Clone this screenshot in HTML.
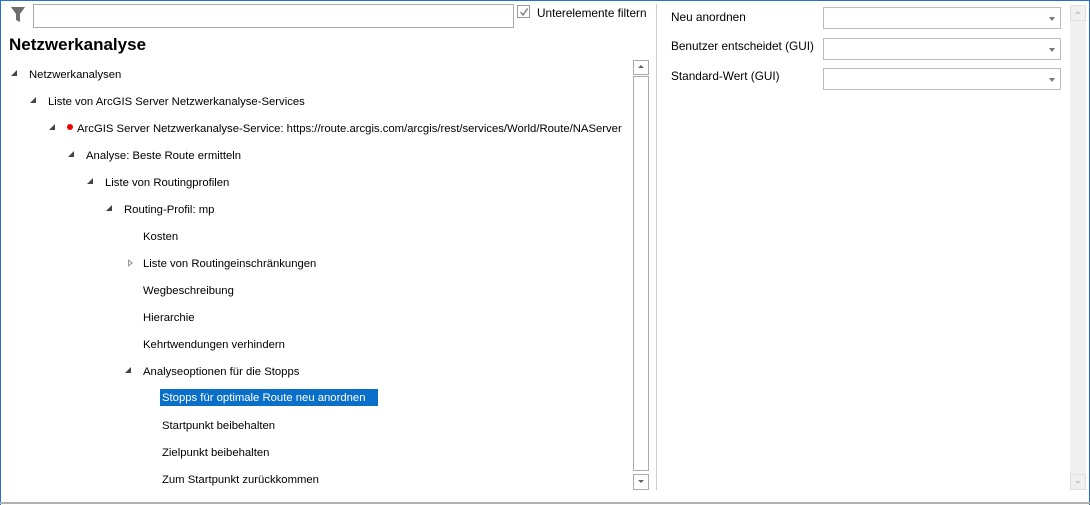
<!DOCTYPE html>
<html><head><meta charset="utf-8"><style>
*{margin:0;padding:0;box-sizing:border-box}
body{width:1090px;height:505px;background:#fff;font-family:"Liberation Sans",sans-serif;font-size:11.3px;color:#000;position:relative;overflow:hidden}
.a{position:absolute}
.t{position:absolute;white-space:nowrap;line-height:16px;margin-top:1px}
.exp{position:absolute;width:0;height:0;border-left:6px solid transparent;border-bottom:6px solid #444}
.col{position:absolute;width:0;height:0;border-top:4px solid transparent;border-bottom:4px solid transparent;border-left:5px solid #999}
.col::after{content:"";position:absolute;left:-4px;top:-2px;border-top:2px solid transparent;border-bottom:2px solid transparent;border-left:2.5px solid #fff}
.cb{position:absolute;left:823px;width:238px;height:22px;border:1px solid #bbb;background:#fff}
.cb::after{content:"";position:absolute;right:5px;top:9px;border-left:3px solid transparent;border-right:3px solid transparent;border-top:4px solid #777}
</style></head><body>
<div class="a" style="left:0;top:0;width:1090px;height:1px;background:#2a6fc9"></div>
<div class="a" style="left:0;top:0;width:1px;height:505px;background:#2a6fc9"></div>
<div class="a" style="left:1089px;top:0;width:1px;height:505px;background:#2a6fc9"></div>
<div class="a" style="left:0;top:502px;width:1090px;height:2px;background:#b0b0b0"></div>

<svg class="a" style="left:10px;top:6px" width="16" height="18" viewBox="0 0 16 18"><path d="M1 1H15L10 8V16L6 14V8Z" fill="#6d6d6d"/></svg>
<div class="a" style="left:33px;top:4px;width:481px;height:24px;border:1px solid #aaa"></div>
<div class="a" style="left:517px;top:5px;width:13px;height:13px;border:1px solid #999"></div>
<svg class="a" style="left:519px;top:7px" width="10" height="10"><path d="M1.5 5L4 8L8.5 1.5" stroke="#777" stroke-width="1.3" fill="none"/></svg>
<div class="t" style="left:537px;top:4px;font-size:11.8px">Unterelemente filtern</div>
<div class="t" style="left:9px;top:34px;font-size:17px;font-weight:bold;line-height:20px">Netzwerkanalyse</div>

<div class="exp" style="left:11px;top:70px"></div><div class="t" style="left:29px;top:66px">Netzwerkanalysen</div>
<div class="exp" style="left:30px;top:97px"></div><div class="t" style="left:48px;top:93px">Liste von ArcGIS Server Netzwerkanalyse-Services</div>
<div class="exp" style="left:49px;top:124px"></div><div class="a" style="left:67px;top:124px;width:6px;height:6px;border-radius:50%;background:#e00"></div><div class="t" style="left:77px;top:120px">ArcGIS Server Netzwerkanalyse-Service: https://route.arcgis.com/arcgis/rest/services/World/Route/NAServer</div>
<div class="exp" style="left:68px;top:151px"></div><div class="t" style="left:86px;top:147px">Analyse: Beste Route ermitteln</div>
<div class="exp" style="left:87px;top:178px"></div><div class="t" style="left:105px;top:174px">Liste von Routingprofilen</div>
<div class="exp" style="left:106px;top:205px"></div><div class="t" style="left:124px;top:201px">Routing-Profil: mp</div>
<div class="t" style="left:143px;top:228px">Kosten</div>
<div class="col" style="left:128px;top:259px"></div><div class="t" style="left:143px;top:255px">Liste von Routingeinschränkungen</div>
<div class="t" style="left:143px;top:282px">Wegbeschreibung</div>
<div class="t" style="left:143px;top:309px">Hierarchie</div>
<div class="t" style="left:143px;top:336px">Kehrtwendungen verhindern</div>
<div class="exp" style="left:125px;top:367px"></div><div class="t" style="left:143px;top:363px">Analyseoptionen für die Stopps</div>
<div class="a" style="left:160px;top:389px;width:218px;height:17px;background:#0a6fc8"></div><div class="t" style="left:162px;top:389px;color:#fff">Stopps für optimale Route neu anordnen</div>
<div class="t" style="left:162px;top:417px">Startpunkt beibehalten</div>
<div class="t" style="left:162px;top:444px">Zielpunkt beibehalten</div>
<div class="t" style="left:162px;top:471px">Zum Startpunkt zurückkommen</div>

<div class="a" style="left:633px;top:60px;width:16px;height:15px;border:1px solid #aaa"></div>
<div class="a" style="left:638px;top:65px;border-left:3px solid transparent;border-right:3px solid transparent;border-bottom:3px solid #666"></div>
<div class="a" style="left:633px;top:76px;width:16px;height:395px;border:1px solid #aaa"></div>
<div class="a" style="left:633px;top:474px;width:16px;height:16px;border:1px solid #aaa"></div>
<div class="a" style="left:638px;top:480px;border-left:3px solid transparent;border-right:3px solid transparent;border-top:3px solid #666"></div>

<div class="a" style="left:656px;top:4px;width:1px;height:486px;background:#ccc"></div>

<div class="t" style="left:671px;top:8px;font-size:11.8px">Neu anordnen</div>
<div class="cb" style="top:7px"></div>
<div class="t" style="left:671px;top:37px;font-size:11.8px">Benutzer entscheidet (GUI)</div>
<div class="cb" style="top:38px"></div>
<div class="t" style="left:671px;top:67px;font-size:11.8px">Standard-Wert (GUI)</div>
<div class="cb" style="top:68px"></div>

<div class="a" style="left:1070px;top:5px;width:16px;height:485px;background:#f0f0f0"></div>
<div class="a" style="left:1070px;top:5px;width:16px;height:16px;border:1px solid #e0e0e0"></div>
<div class="a" style="left:1075px;top:11px;border-left:3px solid transparent;border-right:3px solid transparent;border-bottom:3px solid #ccc"></div>
<div class="a" style="left:1070px;top:474px;width:16px;height:16px;border:1px solid #e0e0e0"></div>
<div class="a" style="left:1075px;top:481px;border-left:3px solid transparent;border-right:3px solid transparent;border-top:3px solid #ccc"></div>
</body></html>
